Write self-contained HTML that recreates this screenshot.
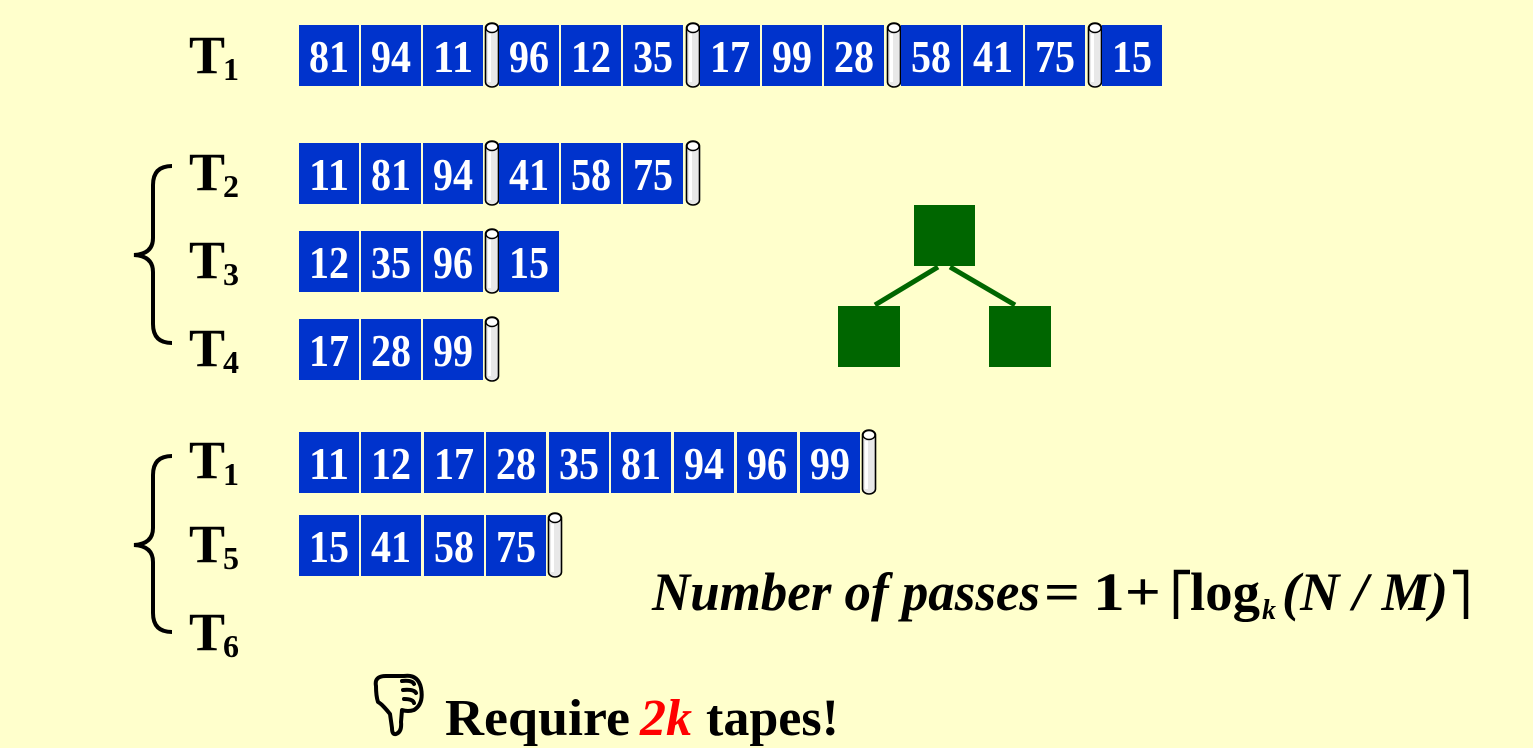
<!DOCTYPE html>
<html><head><meta charset="utf-8"><style>
html,body{margin:0;padding:0;background:#ffffcc;}
svg{display:block;}
text{font-family:"Liberation Serif",serif;}
.c{fill:#0033cc;}
.n{fill:#fff;font-weight:bold;font-size:46px;}
.t{font-weight:bold;font-size:54px;fill:#000;}
.s{font-weight:bold;font-size:32px;fill:#000;}
</style></head><body>
<svg width="1533" height="748" viewBox="0 0 1533 748" xmlns="http://www.w3.org/2000/svg">
<defs>
<g id="cyl">
<rect x="0.5" y="0" width="13" height="64" rx="6.5" ry="5" fill="#e8e8e8" stroke="#000" stroke-width="1.6"/>
<ellipse cx="7" cy="5" rx="6" ry="4.5" fill="#fff" stroke="#000" stroke-width="1.4"/>
<rect x="3" y="11" width="3" height="48" fill="#fff"/>
</g>
<g id="cell"><rect width="60" height="61" class="c"/></g>
</defs>

<!-- labels -->
<text class="t" x="189" y="73">T</text><text class="s" x="223" y="80">1</text>
<text class="t" x="189" y="190">T</text><text class="s" x="223" y="197">2</text>
<text class="t" x="189" y="278">T</text><text class="s" x="223" y="285">3</text>
<text class="t" x="189" y="366">T</text><text class="s" x="223" y="373">4</text>
<text class="t" x="189" y="478">T</text><text class="s" x="223" y="485">1</text>
<text class="t" x="189" y="562">T</text><text class="s" x="223" y="569">5</text>
<text class="t" x="189" y="650">T</text><text class="s" x="223" y="657">6</text>

<!-- braces -->
<path d="M172,166 Q153,166 153,185 L153,238 Q153,254 134,255 Q153,256 153,272 L153,324 Q153,343 172,343" fill="none" stroke="#000" stroke-width="4"/>
<path d="M172,456 Q153,456 153,475 L153,528 Q153,544 134,545 Q153,546 153,562 L153,613 Q153,632 172,632" fill="none" stroke="#000" stroke-width="4"/>

<g class="n">
<!-- Row T1 -->
<use href="#cell" x="299" y="25"/><text x="309" y="72" textLength="40" lengthAdjust="spacingAndGlyphs">81</text>
<use href="#cell" x="361" y="25"/><text x="371" y="72" textLength="40" lengthAdjust="spacingAndGlyphs">94</text>
<use href="#cell" x="423" y="25"/><text x="433" y="72" textLength="40" lengthAdjust="spacingAndGlyphs">11</text>
<use href="#cyl" x="485" y="23"/>
<use href="#cell" x="499" y="25"/><text x="509" y="72" textLength="40" lengthAdjust="spacingAndGlyphs">96</text>
<use href="#cell" x="561" y="25"/><text x="571" y="72" textLength="40" lengthAdjust="spacingAndGlyphs">12</text>
<use href="#cell" x="623" y="25"/><text x="633" y="72" textLength="40" lengthAdjust="spacingAndGlyphs">35</text>
<use href="#cyl" x="686" y="23"/>
<use href="#cell" x="700" y="25"/><text x="710" y="72" textLength="40" lengthAdjust="spacingAndGlyphs">17</text>
<use href="#cell" x="762" y="25"/><text x="772" y="72" textLength="40" lengthAdjust="spacingAndGlyphs">99</text>
<use href="#cell" x="824" y="25"/><text x="834" y="72" textLength="40" lengthAdjust="spacingAndGlyphs">28</text>
<use href="#cyl" x="887" y="23"/>
<use href="#cell" x="901" y="25"/><text x="911" y="72" textLength="40" lengthAdjust="spacingAndGlyphs">58</text>
<use href="#cell" x="963" y="25"/><text x="973" y="72" textLength="40" lengthAdjust="spacingAndGlyphs">41</text>
<use href="#cell" x="1025" y="25"/><text x="1035" y="72" textLength="40" lengthAdjust="spacingAndGlyphs">75</text>
<use href="#cyl" x="1088" y="23"/>
<use href="#cell" x="1102" y="25"/><text x="1112" y="72" textLength="40" lengthAdjust="spacingAndGlyphs">15</text>

<!-- T2 -->
<use href="#cell" x="299" y="143"/><text x="309" y="190" textLength="40" lengthAdjust="spacingAndGlyphs">11</text>
<use href="#cell" x="361" y="143"/><text x="371" y="190" textLength="40" lengthAdjust="spacingAndGlyphs">81</text>
<use href="#cell" x="423" y="143"/><text x="433" y="190" textLength="40" lengthAdjust="spacingAndGlyphs">94</text>
<use href="#cyl" x="485" y="141"/>
<use href="#cell" x="499" y="143"/><text x="509" y="190" textLength="40" lengthAdjust="spacingAndGlyphs">41</text>
<use href="#cell" x="561" y="143"/><text x="571" y="190" textLength="40" lengthAdjust="spacingAndGlyphs">58</text>
<use href="#cell" x="623" y="143"/><text x="633" y="190" textLength="40" lengthAdjust="spacingAndGlyphs">75</text>
<use href="#cyl" x="686" y="141"/>

<!-- T3 -->
<use href="#cell" x="299" y="231"/><text x="309" y="278" textLength="40" lengthAdjust="spacingAndGlyphs">12</text>
<use href="#cell" x="361" y="231"/><text x="371" y="278" textLength="40" lengthAdjust="spacingAndGlyphs">35</text>
<use href="#cell" x="423" y="231"/><text x="433" y="278" textLength="40" lengthAdjust="spacingAndGlyphs">96</text>
<use href="#cyl" x="485" y="229"/>
<use href="#cell" x="499" y="231"/><text x="509" y="278" textLength="40" lengthAdjust="spacingAndGlyphs">15</text>

<!-- T4 -->
<use href="#cell" x="299" y="319"/><text x="309" y="366" textLength="40" lengthAdjust="spacingAndGlyphs">17</text>
<use href="#cell" x="361" y="319"/><text x="371" y="366" textLength="40" lengthAdjust="spacingAndGlyphs">28</text>
<use href="#cell" x="423" y="319"/><text x="433" y="366" textLength="40" lengthAdjust="spacingAndGlyphs">99</text>
<use href="#cyl" x="485" y="317"/>

<!-- T1b -->
<use href="#cell" x="299" y="432"/><text x="309" y="479" textLength="40" lengthAdjust="spacingAndGlyphs">11</text>
<use href="#cell" x="361" y="432"/><text x="371" y="479" textLength="40" lengthAdjust="spacingAndGlyphs">12</text>
<use href="#cell" x="424" y="432"/><text x="434" y="479" textLength="40" lengthAdjust="spacingAndGlyphs">17</text>
<use href="#cell" x="486" y="432"/><text x="496" y="479" textLength="40" lengthAdjust="spacingAndGlyphs">28</text>
<use href="#cell" x="549" y="432"/><text x="559" y="479" textLength="40" lengthAdjust="spacingAndGlyphs">35</text>
<use href="#cell" x="611" y="432"/><text x="621" y="479" textLength="40" lengthAdjust="spacingAndGlyphs">81</text>
<use href="#cell" x="674" y="432"/><text x="684" y="479" textLength="40" lengthAdjust="spacingAndGlyphs">94</text>
<use href="#cell" x="737" y="432"/><text x="747" y="479" textLength="40" lengthAdjust="spacingAndGlyphs">96</text>
<use href="#cell" x="800" y="432"/><text x="810" y="479" textLength="40" lengthAdjust="spacingAndGlyphs">99</text>
<use href="#cyl" x="862" y="430"/>

<!-- T5 -->
<use href="#cell" x="299" y="515"/><text x="309" y="562" textLength="40" lengthAdjust="spacingAndGlyphs">15</text>
<use href="#cell" x="361" y="515"/><text x="371" y="562" textLength="40" lengthAdjust="spacingAndGlyphs">41</text>
<use href="#cell" x="424" y="515"/><text x="434" y="562" textLength="40" lengthAdjust="spacingAndGlyphs">58</text>
<use href="#cell" x="486" y="515"/><text x="496" y="562" textLength="40" lengthAdjust="spacingAndGlyphs">75</text>
<use href="#cyl" x="548" y="513"/>
</g>

<!-- tree -->
<line x1="938" y1="267" x2="875" y2="305" stroke="#006600" stroke-width="5"/>
<line x1="950" y1="267" x2="1015" y2="305" stroke="#006600" stroke-width="5"/>
<rect x="914" y="205" width="61" height="61" fill="#006600"/>
<rect x="838" y="306" width="62" height="61" fill="#006600"/>
<rect x="989" y="306" width="62" height="61" fill="#006600"/>

<!-- formula -->
<g font-weight="bold" font-size="54" fill="#000">
<text x="652" y="610" font-style="italic" textLength="388" lengthAdjust="spacingAndGlyphs">Number of passes</text>
<text x="1044" y="610" textLength="36" lengthAdjust="spacingAndGlyphs">=</text>
<text x="1093" y="610" textLength="68" lengthAdjust="spacingAndGlyphs">1+</text>
<path d="M1176,619 L1176,572 L1190,572" fill="none" stroke="#000" stroke-width="4.5"/>
<text x="1190" y="610" textLength="70" lengthAdjust="spacingAndGlyphs">log</text>
<text x="1262" y="619" font-size="28" font-style="italic">k</text>
<text x="1282" y="610" font-style="italic" textLength="166" lengthAdjust="spacingAndGlyphs">(N / M)</text>
<path d="M1453,572 L1466,572 L1466,619" fill="none" stroke="#000" stroke-width="4.5"/>
</g>

<!-- thumbs down -->
<g fill="none" stroke="#000" stroke-width="4" stroke-linejoin="round" stroke-linecap="round">
<path d="M376,686 Q374,676 386,676 L404,676 Q418,674 421,688 Q424,704 414,710 Q408,712 402,710 L401,722 Q402,732 396,734 Q392,735 392,728 L390,714 Q382,704 378,702 Q376,696 376,686 Z"/>
<path d="M402,681 Q412,680 414,684 M403,690 Q414,689 416,693 M404,699 Q413,699 414,703"/>
</g>

<!-- Require -->
<text x="445" y="735" font-weight="bold" font-size="52" fill="#000" textLength="185" lengthAdjust="spacingAndGlyphs">Require</text>
<text x="640" y="735" font-weight="bold" font-style="italic" font-size="52" fill="#ff0000" textLength="52" lengthAdjust="spacingAndGlyphs">2k</text>
<text x="706" y="735" font-weight="bold" font-size="52" fill="#000" textLength="133" lengthAdjust="spacingAndGlyphs">tapes!</text>
</svg>
</body></html>
